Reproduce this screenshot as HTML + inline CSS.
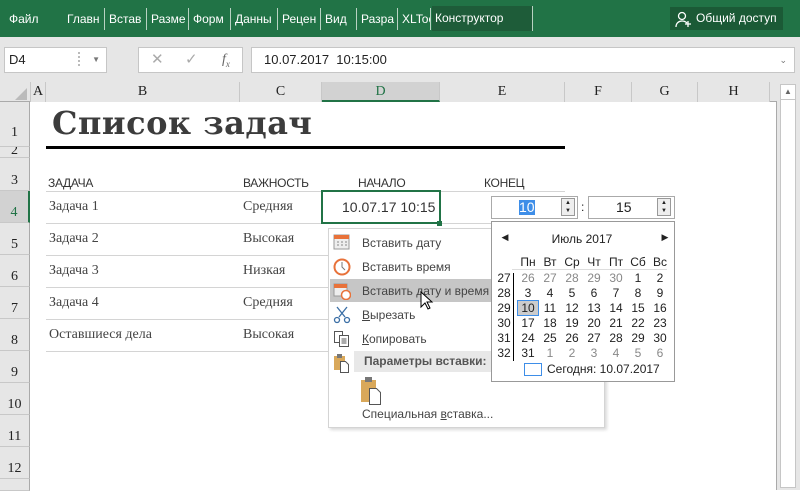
<!DOCTYPE html>
<html><head><meta charset="utf-8"><style>
*{margin:0;padding:0;box-sizing:border-box}
body{width:800px;height:490px;overflow:hidden;background:#fff;font-family:"Liberation Sans","DejaVu Sans",sans-serif;position:relative;font-size:12px;color:#222}
.a{position:absolute}
.tab{position:absolute;top:8px;height:22px;line-height:22px;color:#fff;font-size:12px;white-space:nowrap;overflow:hidden;border-right:1px solid #b8d2c2;padding-left:3px}
.rh{position:absolute;left:0;width:30px;background:#e6e6e6;border-bottom:1px solid #c8c8c8;border-right:1px solid #aaa;font-family:"Liberation Serif",serif;font-size:14px;text-align:center}
.ch{position:absolute;top:82px;height:20px;line-height:20px;font-family:"Liberation Serif",serif;font-size:14px;text-align:center;border-right:1px solid #c8c8c8;background:#e6e6e6}
.cell{position:absolute;font-family:"Liberation Serif",serif;font-size:14px;color:#444}
.hl{position:absolute;left:46px;width:519px;height:1px;background:#d4d4d4}
.mi{position:absolute;left:362px;font-size:12px;color:#444}
.cal span{position:absolute;width:22px;text-align:center;font-size:12px}
</style></head><body>
<div class="a" style="left:0;top:0;width:800px;height:37px;background:#217346"></div>
<div class="tab" style="left:6px;border:none;width:50px">Файл</div>
<div class="tab" style="left:64px;width:41px">Главн</div>
<div class="tab" style="left:106px;width:41px">Встав</div>
<div class="tab" style="left:148px;width:41px">Разме</div>
<div class="tab" style="left:190px;width:41px">Форм</div>
<div class="tab" style="left:232px;width:46px">Данны</div>
<div class="tab" style="left:279px;width:42px">Рецен</div>
<div class="tab" style="left:322px;width:35px">Вид</div>
<div class="tab" style="left:358px;width:40px">Разра</div>
<div class="tab" style="left:399px;width:32px">XLToo</div>
<div class="tab" style="left:432px;width:101px;background:#1e5c39;top:6px;height:25px;line-height:25px">Конструктор</div>
<div class="a" style="left:670px;top:7px;width:113px;height:23px;background:#1b5a36;color:#fff;font-size:12px;line-height:23px;padding-left:26px">Общий доступ</div>
<svg class="a" style="left:675px;top:10px" width="18" height="18" viewBox="0 0 18 18" fill="none" stroke="#fff" stroke-width="1.3"><circle cx="7" cy="6" r="3.5"/><path d="M1 17c0-4 3-6 6-6s4 1 5 2M13 11v6M10 14h6"/></svg>
<div class="a" style="left:0;top:37px;width:800px;height:45px;background:#e6e6e6"></div>
<div class="a" style="left:4px;top:47px;width:103px;height:26px;background:#fff;border:1px solid #c6c6c6;font-size:13px;line-height:24px;padding-left:4px">D4<span style="position:absolute;right:6px;font-size:8px;color:#777">▼</span></div>
<div class="a" style="left:78px;top:52px;width:2px;height:14px;border-left:2px dotted #bbb"></div>
<div class="a" style="left:138px;top:47px;width:105px;height:26px;background:#fff;border:1px solid #c6c6c6;color:#aaa;font-size:15px;line-height:24px"><span style="position:absolute;left:12px">✕</span><span style="position:absolute;left:46px">✓</span><span style="position:absolute;left:83px;font-family:'Liberation Serif',serif;font-style:italic;color:#666;font-size:14px">f<sub style="font-size:9px">x</sub></span></div>
<div class="a" style="left:251px;top:47px;width:544px;height:26px;background:#fff;border:1px solid #c6c6c6;font-size:13px;line-height:24px;padding-left:12px">10.07.2017&nbsp; 10:15:00<span style="position:absolute;right:7px;font-size:9px;color:#777">⌄</span></div>
<div class="a" style="left:0;top:82px;width:800px;height:20px;background:#e6e6e6;border-bottom:1px solid #aaa"></div>
<svg class="a" style="left:14px;top:87px" width="14" height="14"><path d="M13 1V13H1Z" fill="#bbb"/></svg>
<div class="ch" style="left:30px;width:16px;border-left:1px solid #c8c8c8">A</div>
<div class="ch" style="left:46px;width:194px">B</div>
<div class="ch" style="left:240px;width:82px">C</div>
<div class="ch" style="left:322px;width:118px;background:#d2d2d2;color:#217346;border-bottom:2px solid #217346;height:20px">D</div>
<div class="ch" style="left:440px;width:125px">E</div>
<div class="ch" style="left:565px;width:67px">F</div>
<div class="ch" style="left:632px;width:66px">G</div>
<div class="ch" style="left:698px;width:72px">H</div>
<div class="a" style="left:777px;top:82px;width:23px;height:408px;background:#e6e6e6"></div>
<div class="a" style="left:780px;top:84px;width:16px;height:404px;background:#fff;border:1px solid #c6c6c6"></div>
<div class="a" style="left:780px;top:84px;width:16px;height:16px;border-bottom:1px solid #c6c6c6;font-size:8px;text-align:center;line-height:15px;color:#666">▲</div>
<div class="a" style="left:776px;top:102px;width:1px;height:388px;background:#aaa"></div>
<div class="a" style="left:0;top:102px;width:2px;height:388px;background:#217346"></div>
<div class="rh" style="top:102px;height:45px;line-height:62px">1</div>
<div class="rh" style="top:147px;height:11px;line-height:8px;overflow:hidden">2</div>
<div class="rh" style="top:158px;height:33px;line-height:46px">3</div>
<div class="rh" style="top:191px;height:32px;line-height:44px;background:#d2d2d2;color:#217346;border-right:2px solid #217346">4</div>
<div class="rh" style="top:223px;height:32px;line-height:44px">5</div>
<div class="rh" style="top:255px;height:32px;line-height:44px">6</div>
<div class="rh" style="top:287px;height:32px;line-height:44px">7</div>
<div class="rh" style="top:319px;height:32px;line-height:44px">8</div>
<div class="rh" style="top:351px;height:32px;line-height:44px">9</div>
<div class="rh" style="top:383px;height:32px;line-height:44px">10</div>
<div class="rh" style="top:415px;height:32px;line-height:44px">11</div>
<div class="rh" style="top:447px;height:32px;line-height:44px">12</div>
<div class="rh" style="top:479px;height:12px"></div>
<div class="a" style="left:52px;top:104px;font-family:'DejaVu Serif','Liberation Serif',serif;font-weight:bold;font-size:32px;color:#3c3c3c;letter-spacing:0.5px">Список задач</div>
<div class="a" style="left:46px;top:146px;width:519px;height:3px;background:#000"></div>
<div class="a" style="left:48px;top:176px;font-size:12px;color:#333;letter-spacing:-0.3px">ЗАДАЧА</div>
<div class="a" style="left:243px;top:176px;font-size:12px;color:#333;letter-spacing:-0.3px">ВАЖНОСТЬ</div>
<div class="a" style="left:358px;top:176px;font-size:12px;color:#333;letter-spacing:-0.3px">НАЧАЛО</div>
<div class="a" style="left:484px;top:176px;font-size:12px;color:#333;letter-spacing:-0.3px">КОНЕЦ</div>
<div class="hl" style="top:191px"></div><div class="hl" style="top:223px"></div><div class="hl" style="top:255px"></div><div class="hl" style="top:287px"></div><div class="hl" style="top:319px"></div><div class="hl" style="top:351px"></div>
<div class="cell" style="left:49px;top:199px">Задача 1</div><div class="cell" style="left:243px;top:199px">Средняя</div>
<div class="cell" style="left:49px;top:231px">Задача 2</div><div class="cell" style="left:243px;top:231px">Высокая</div>
<div class="cell" style="left:49px;top:263px">Задача 3</div><div class="cell" style="left:243px;top:263px">Низкая</div>
<div class="cell" style="left:49px;top:295px">Задача 4</div><div class="cell" style="left:243px;top:295px">Средняя</div>
<div class="cell" style="left:49px;top:327px">Оставшиеся дела</div><div class="cell" style="left:243px;top:327px">Высокая</div>
<div class="a" style="left:321px;top:190px;width:120px;height:34px;border:2px solid #217346;background:#fff;font-size:14px;color:#333;line-height:30px;padding-left:19px">10.07.17 10:15</div>
<div class="a" style="left:437px;top:221px;width:5px;height:5px;background:#217346"></div>
<div class="a" style="left:491px;top:196px;width:87px;height:23px;border:1px solid #aaa;background:#fff"><span style="position:absolute;left:27px;top:3px;background:#3e8ee8;color:#fff;font-size:14px;line-height:15px">10</span></div>
<div class="a" style="left:561px;top:198px;width:14px;height:18px;border:1px solid #999;background:#eee;font-size:6px;line-height:8px;text-align:center">▲<br>▼</div>
<div class="a" style="left:581px;top:200px;font-size:12px">:</div>
<div class="a" style="left:588px;top:196px;width:87px;height:23px;border:1px solid #aaa;background:#fff;font-size:14px;line-height:21px;padding-left:27px">15</div>
<div class="a" style="left:657px;top:198px;width:14px;height:18px;border:1px solid #999;background:#eee;font-size:6px;line-height:8px;text-align:center">▲<br>▼</div>
<div class="a" style="left:328px;top:228px;width:277px;height:200px;background:#fff;border:1px solid #d4d4d4;box-shadow:2px 2px 3px rgba(0,0,0,.15)"></div>
<div class="a" style="left:330px;top:279px;width:162px;height:23px;background:#c6c6c6"></div>
<div class="mi" style="top:236px">Вставить дату</div>
<div class="mi" style="top:260px">Вставить время</div>
<div class="mi" style="top:284px">Вставить дату и время</div>
<div class="mi" style="top:308px"><u>В</u>ырезать</div>
<div class="mi" style="top:332px"><u>К</u>опировать</div>
<div class="a" style="left:354px;top:351px;width:137px;height:21px;background:#e8e8e8;font-weight:bold;font-size:12px;color:#555;line-height:21px;padding-left:10px">Параметры вставки:</div>
<div class="mi" style="top:407px">Специальная <u>в</u>ставка...</div>
<svg class="a" style="left:333px;top:233px" width="18" height="18"><rect x="1" y="2" width="15" height="14" fill="#eee" stroke="#999"/><rect x="1" y="2" width="15" height="4" fill="#e8723a"/><path d="M4 9h2M8 9h2M12 9h2M4 12h2M8 12h2M12 12h2" stroke="#888"/></svg>
<svg class="a" style="left:333px;top:258px" width="18" height="18"><circle cx="9" cy="9" r="7.5" fill="#fff" stroke="#e8723a" stroke-width="2"/><path d="M9 4v5l3 3" stroke="#777" fill="none"/></svg>
<svg class="a" style="left:333px;top:282px" width="18" height="18"><rect x="1" y="2" width="13" height="12" fill="#eee" stroke="#999"/><rect x="1" y="2" width="13" height="4" fill="#e8723a"/><circle cx="13" cy="13" r="4.5" fill="#fff" stroke="#e8723a" stroke-width="1.5"/></svg>
<svg class="a" style="left:333px;top:306px" width="18" height="18" fill="none" stroke="#3a6ea5" stroke-width="1.3"><path d="M4 1l8 10M14 1L6 11"/><circle cx="4" cy="14" r="2.5"/><circle cx="14" cy="14" r="2.5"/></svg>
<svg class="a" style="left:333px;top:330px" width="18" height="18" fill="#fff" stroke="#555"><rect x="1.5" y="1.5" width="8" height="11"/><rect x="6.5" y="5.5" width="9" height="11"/><path d="M8.5 9h5M8.5 11h5M8.5 13h5"/></svg>
<svg class="a" style="left:333px;top:353px" width="18" height="20"><rect x="1" y="3" width="11" height="14" fill="#d9a85a"/><rect x="4" y="1" width="5" height="4" fill="#777"/><path d="M7.5 8.5h5l3 3v8h-8z" fill="#fff" stroke="#555"/></svg>
<svg class="a" style="left:360px;top:376px" width="22" height="30"><rect x="1" y="4" width="15" height="22" fill="#d9a85a"/><rect x="5" y="1" width="7" height="5" fill="#777"/><path d="M9.5 12.5h7l4 4v12h-11z" fill="#fff" stroke="#555"/></svg>
<svg class="a" style="left:420px;top:291px" width="14" height="20"><path d="M1 1v15l4-4 3 6 2-1-3-6h5z" fill="#fff" stroke="#000"/></svg>
<div class="a cal" style="left:491px;top:221px;width:184px;height:161px;background:#fff;border:1px solid #999">
<span style="left:2px;top:10px;font-size:9px">◀</span>
<span style="left:40px;top:10px;width:100px;font-size:12px">Июль 2017</span>
<span style="left:162px;top:10px;font-size:9px">▶</span>
</div>
<div class="a" style="left:512px;top:269px;width:155px;height:1px;background:#ddd"></div>
<div class="a" style="left:513px;top:273px;width:1px;height:88px;background:#000"></div>
<div class="a" style="left:517px;top:300px;width:22px;height:16px;background:#ccc;border:1px solid #3e8ee8"></div>
<div class="a" style="left:524px;top:363px;width:18px;height:13px;border:1px solid #3e8ee8"></div>
<div class="a" style="left:547px;top:362px;font-size:12px">Сегодня: 10.07.2017</div>
<div class="a cal" style="left:0;top:0">
<span style="left:517px;top:255px">Пн</span><span style="left:539px;top:255px">Вт</span><span style="left:561px;top:255px">Ср</span><span style="left:583px;top:255px">Чт</span><span style="left:605px;top:255px">Пт</span><span style="left:627px;top:255px">Сб</span><span style="left:649px;top:255px">Вс</span>
<span style="left:493px;top:271px">27</span><span style="left:493px;top:286px">28</span><span style="left:493px;top:301px">29</span><span style="left:493px;top:316px">30</span><span style="left:493px;top:331px">31</span><span style="left:493px;top:346px">32</span>
<span style="left:517px;top:271px;color:#888">26</span><span style="left:539px;top:271px;color:#888">27</span><span style="left:561px;top:271px;color:#888">28</span><span style="left:583px;top:271px;color:#888">29</span><span style="left:605px;top:271px;color:#888">30</span><span style="left:627px;top:271px">1</span><span style="left:649px;top:271px">2</span>
<span style="left:517px;top:286px">3</span><span style="left:539px;top:286px">4</span><span style="left:561px;top:286px">5</span><span style="left:583px;top:286px">6</span><span style="left:605px;top:286px">7</span><span style="left:627px;top:286px">8</span><span style="left:649px;top:286px">9</span>
<span style="left:517px;top:301px">10</span><span style="left:539px;top:301px">11</span><span style="left:561px;top:301px">12</span><span style="left:583px;top:301px">13</span><span style="left:605px;top:301px">14</span><span style="left:627px;top:301px">15</span><span style="left:649px;top:301px">16</span>
<span style="left:517px;top:316px">17</span><span style="left:539px;top:316px">18</span><span style="left:561px;top:316px">19</span><span style="left:583px;top:316px">20</span><span style="left:605px;top:316px">21</span><span style="left:627px;top:316px">22</span><span style="left:649px;top:316px">23</span>
<span style="left:517px;top:331px">24</span><span style="left:539px;top:331px">25</span><span style="left:561px;top:331px">26</span><span style="left:583px;top:331px">27</span><span style="left:605px;top:331px">28</span><span style="left:627px;top:331px">29</span><span style="left:649px;top:331px">30</span>
<span style="left:517px;top:346px">31</span><span style="left:539px;top:346px;color:#888">1</span><span style="left:561px;top:346px;color:#888">2</span><span style="left:583px;top:346px;color:#888">3</span><span style="left:605px;top:346px;color:#888">4</span><span style="left:627px;top:346px;color:#888">5</span><span style="left:649px;top:346px;color:#888">6</span>
</div>
</body></html>
